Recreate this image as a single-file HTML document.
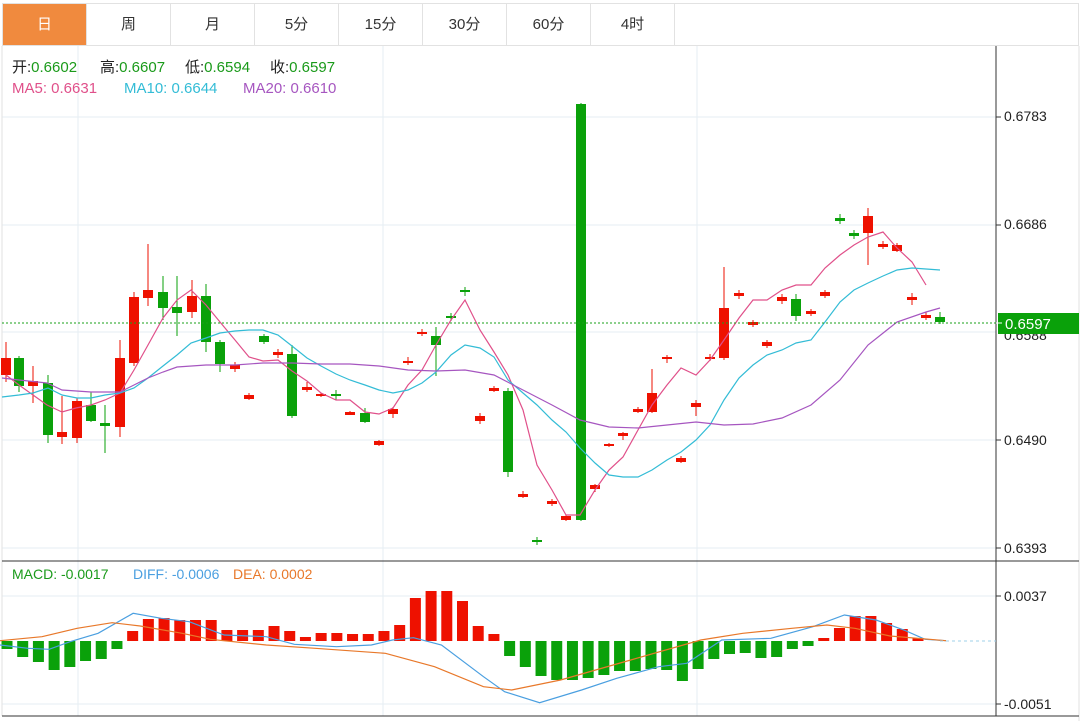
<!DOCTYPE html>
<html><head><meta charset="utf-8"><style>
body{margin:0;background:#fff;width:1090px;height:721px;overflow:hidden;font-family:"Liberation Sans","Noto Sans CJK SC",sans-serif;}
.tabs{position:absolute;left:2px;top:3px;height:43px;width:1077px;border:1px solid #e2e2e2;box-sizing:border-box;display:flex}
.tab{width:84px;border-right:1px solid #e2e2e2;box-sizing:border-box;text-align:center;line-height:42px;font-size:15px;color:#333}
.tab.on{background:#f08a3e;color:#fff}
svg{position:absolute;left:0;top:0}
</style></head><body>
<div class="tabs"><div class="tab on">日</div><div class="tab">周</div><div class="tab">月</div><div class="tab">5分</div><div class="tab">15分</div><div class="tab">30分</div><div class="tab">60分</div><div class="tab">4时</div></div>
<svg id="s" width="1090" height="721" style="top:0" xmlns="http://www.w3.org/2000/svg" font-family="Liberation Sans, Noto Sans CJK SC, sans-serif">
<g stroke="#e6edf3" stroke-width="1">
<line x1="2" y1="117" x2="996" y2="117"/><line x1="2" y1="225" x2="996" y2="225"/><line x1="2" y1="332" x2="996" y2="332"/><line x1="2" y1="440" x2="996" y2="440"/><line x1="2" y1="548" x2="996" y2="548"/>
<line x1="2" y1="596" x2="996" y2="596"/><line x1="2" y1="704" x2="996" y2="704"/>
<line x1="78" y1="46" x2="78" y2="716"/><line x1="383" y1="46" x2="383" y2="716"/><line x1="697" y1="46" x2="697" y2="716"/>
</g>
<line x1="2" y1="46" x2="2" y2="716" stroke="#e2e2e2"/>
<line x1="1079" y1="46" x2="1079" y2="721" stroke="#e2e2e2"/>
<line x1="996" y1="46" x2="996" y2="716" stroke="#333"/>
<line x1="2" y1="561" x2="1079" y2="561" stroke="#333"/>
<line x1="2" y1="716" x2="1079" y2="716" stroke="#333"/>
<g id="c"></g>
<line x1="2" y1="323" x2="996" y2="323" stroke="#1aa01a" stroke-dasharray="2,2"/>
<g font-size="14" fill="#222">
<text x="1004" y="121">0.6783</text><text x="1004" y="229">0.6686</text><text x="1004" y="340">0.6588</text><text x="1004" y="445">0.6490</text><text x="1004" y="553">0.6393</text>
<text x="1004" y="601">0.0037</text><text x="1004" y="709">-0.0051</text>
</g>
<g stroke="#333"><line x1="996" y1="117" x2="1001" y2="117"/><line x1="996" y1="225" x2="1001" y2="225"/><line x1="996" y1="440" x2="1001" y2="440"/><line x1="996" y1="548" x2="1001" y2="548"/><line x1="996" y1="596" x2="1001" y2="596"/><line x1="996" y1="704" x2="1001" y2="704"/></g>
<rect x="998" y="313" width="81" height="21" fill="#0aa10a"/>
<line x1="996" y1="323" x2="1002" y2="323" stroke="#fff"/>
<text x="1005" y="329" font-size="15" fill="#fff">0.6597</text>
<g font-size="15">
<text x="12" y="72" fill="#222">开:<tspan fill="#1a9a1a">0.6602</tspan></text>
<text x="100" y="72" fill="#222">高:<tspan fill="#1a9a1a">0.6607</tspan></text>
<text x="185" y="72" fill="#222">低:<tspan fill="#1a9a1a">0.6594</tspan></text>
<text x="270" y="72" fill="#222">收:<tspan fill="#1a9a1a">0.6597</tspan></text>
<text x="12" y="93" fill="#e0508a">MA5: 0.6631</text>
<text x="124" y="93" fill="#33bcd6">MA10: 0.6644</text>
<text x="243" y="93" fill="#a656c0">MA20: 0.6610</text>
</g>
<g font-size="14">
<text x="12" y="579" fill="#1a9a1a">MACD: -0.0017</text>
<text x="133" y="579" fill="#4a9fe0">DIFF: -0.0006</text>
<text x="233" y="579" fill="#e8782a">DEA: 0.0002</text>
</g>
<line x1="940" y1="641" x2="996" y2="641" stroke="#9fd0ea" stroke-dasharray="3,3"/>
</svg>
<script>
var R="#ee1100",G="#0aa10a",g=document.getElementById('c'),h='';
var C=[[6,358,375,342,382,R],[19,358,386,356,392,G],[33,381,386,366,403,R],[48,383,435,375,443,G],[62,432,437,396,444,R],[77,401,438,398,443,R],[91,405,421,392,422,G],[105,423,426,405,453,G],[120,358,427,340,437,R],[134,297,363,292,366,R],[148,290,298,244,306,R],[163,292,308,276,320,G],[177,307,313,276,336,G],[192,296,312,280,318,R],[206,296,342,284,352,G],[220,342,364,340,372,G],[235,365,369,362,372,R],[249,395,399,393,400,R],[264,336,342,334,344,G],[278,352,355,349,358,R],[292,354,416,345,418,G],[307,387,390,382,392,R],[321,394,396,393,397,R],[336,394,396,390,400,G],[350,412,415,411,415,R],[365,413,422,408,423,G],[379,441,445,440,446,R],[393,409,414,407,418,R],[408,361,363,357,365,R],[422,332,334,329,336,R],[436,336,345,327,376,G],[451,316,318,313,321,G],[465,290,292,287,296,G],[480,416,421,413,424,R],[494,388,391,386,392,R],[508,391,472,388,477,G],[523,494,497,491,498,R],[537,540,542,537,545,G],[552,501,504,499,506,R],[566,516,520,515,521,R],[581,104,520,103,521,G],[595,485,489,484,492,R],[609,444,446,443,447,R],[623,433,436,432,440,R],[638,409,412,407,413,R],[652,393,412,369,413,R],[667,357,359,355,363,R],[681,458,462,456,463,R],[696,403,407,400,416,R],[710,357,359,354,361,R],[724,308,358,267,360,R],[739,293,296,290,299,R],[753,322,325,320,327,R],[767,342,346,340,348,R],[782,297,301,294,304,R],[796,299,316,294,321,G],[811,311,314,309,316,R],[825,292,296,290,298,R],[840,218,221,214,224,G],[854,233,236,230,239,G],[868,216,233,208,265,R],[883,244,247,241,249,R],[897,245,251,243,252,R],[912,297,300,293,305,R],[926,315,318,312,320,R],[940,317,322,312,324,G]];
C.forEach(function(c){h+='<line x1="'+c[0]+'" x2="'+c[0]+'" y1="'+c[3]+'" y2="'+c[4]+'" stroke="'+c[5]+'"/><rect x="'+(c[0]-5)+'" y="'+c[1]+'" width="10" height="'+Math.max(2,c[2]-c[1])+'" fill="'+c[5]+'"/>';});
function pl(p,col){return '<polyline fill="none" stroke="'+col+'" stroke-width="1.2" points="'+p+'"/>';}
h+=pl("6,375 19,385 33,395 47,405 62,412 76,408 91,405 105,400 120,393 134,370 148,345 163,318 177,300 191,290 206,305 220,322 235,340 249,357 263,361 278,360 292,371 307,381 321,393 336,400 350,400 365,412 379,414 393,408 408,385 422,370 436,345 451,320 465,300 480,330 494,352 508,375 523,410 537,465 552,490 566,515 580,515 595,490 609,470 623,457 638,430 652,405 667,385 681,368 696,375 710,360 724,340 739,318 753,300 767,300 782,290 796,285 811,285 825,268 840,255 854,245 868,237 883,232 897,248 912,262 926,285","#e0508a");
h+=pl("2,397 19,395 33,393 48,388 62,395 77,398 91,398 105,395 120,393 134,388 148,378 163,366 177,355 191,343 206,338 220,333 235,331 249,330 263,330 278,335 292,346 307,358 321,366 336,374 350,380 365,385 379,390 393,393 408,390 422,383 436,372 451,355 465,345 480,348 494,357 508,380 523,393 537,405 552,420 566,432 580,448 595,463 609,475 623,477 638,477 652,470 667,460 681,452 696,440 710,425 724,400 739,378 753,365 767,355 782,350 796,343 811,340 825,322 840,302 854,290 868,283 883,276 897,270 912,268 940,270","#33bcd6");
h+=pl("2,378 19,380 47,383 62,390 91,392 105,392 120,392 134,385 148,378 163,372 177,367 206,365 235,365 263,363 292,363 321,364 350,364 379,366 408,370 436,371 465,370 494,375 523,390 552,405 580,420 609,427 638,428 667,425 696,422 724,425 753,424 782,418 811,405 840,380 868,345 897,322 926,312 940,308","#a656c0");
var H=[-8,-16,-21,-29,-26,-20,-18,-8,10,22,23,21,21,21,11,11,11,15,10,4,8,8,7,7,10,16,43,50,50,40,15,7,-15,-26,-35,-39,-39,-37,-34,-30,-30,-28,-29,-40,-28,-18,-13,-12,-17,-16,-8,-5,3,13,25,25,18,12,3];
H.forEach(function(v,i){var x=7+i*(911/58);h+='<rect x="'+(x-5.5)+'" y="'+(v>0?641-v:641)+'" width="11" height="'+Math.abs(v)+'" fill="'+(v>0?R:G)+'"/>';});
function cv(a){return a.map(function(p){return (p[0]/1.427).toFixed(1)+','+(550+p[1]/3).toFixed(1)}).join(' ');}
h+=pl(cv([[0,285],[40,295],[70,298],[100,275],[140,250],[190,190],[230,205],[270,215],[320,255],[380,260],[420,283],[480,290],[530,285],[560,270],[590,263],[630,285],[690,380],[720,425],[770,458],[830,420],[880,385],[940,350],[980,340],[1030,270],[1100,265],[1160,230],[1205,195],[1250,210],[1290,240],[1320,268],[1350,272]]),"#4a9fe0");
h+=pl(cv([[0,272],[60,260],[110,235],[160,218],[200,228],[260,250],[300,268],[380,285],[450,295],[550,310],[620,350],[690,410],[730,420],[800,390],[900,330],[1000,270],[1060,250],[1130,235],[1180,225],[1220,235],[1270,258],[1350,272]]),"#e8782a");
g.innerHTML=h;
</script>
</body></html>
